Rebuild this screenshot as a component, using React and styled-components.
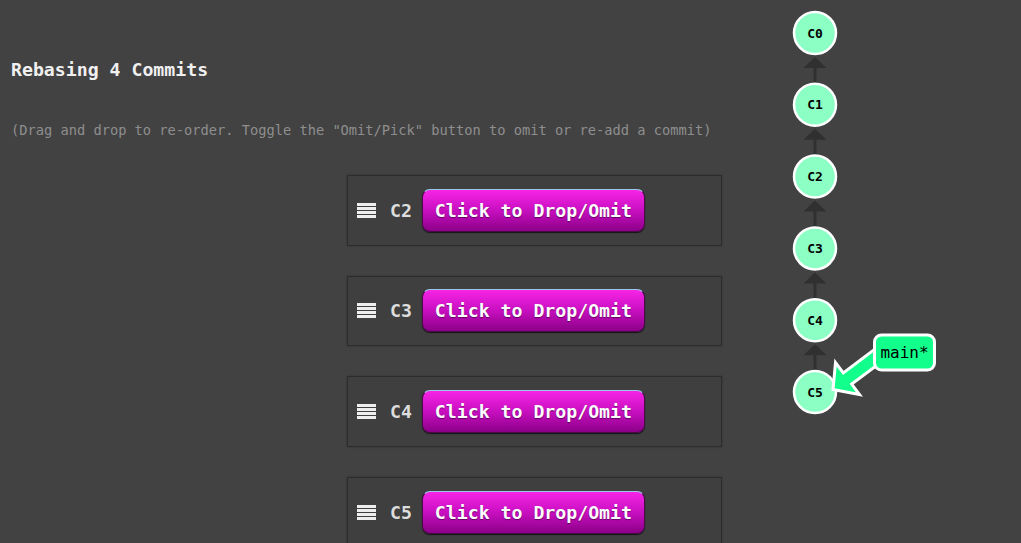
import React from 'react';
import styled, { createGlobalStyle } from 'styled-components';

const commits = ['C2', 'C3', 'C4', 'C5'];
const tree = ['C0', 'C1', 'C2', 'C3', 'C4', 'C5'];
const NODE_X = 815;
const nodeY = (i) => 33 + i * 71.8;

const GlobalStyle = createGlobalStyle`
  html, body {
    margin: 0;
    padding: 0;
    background: #424242;
    overflow: hidden;
  }
  * {
    box-sizing: border-box;
  }
`;

const GripIcon = () => (
  <svg width='19' height='15' viewBox='0 0 19 15'>
    {[0, 4, 8, 12].map((y) => (
      <rect key={y} x='0' y={y} width='19' height='3' fill='#eeeeee' />
    ))}
  </svg>
);

const CommitRow = ({ id }) => (
  <Card>
    <GripIcon />
    <CommitId>{id}</CommitId>
    <DropButton>Click to Drop/Omit</DropButton>
  </Card>
);

const Edge = ({ from, to }) => {
  const top = nodeY(from) + 24;
  const bottom = nodeY(to) - 22;
  return (
    <g fill='#303030' stroke='#303030'>
      <line x1={NODE_X} y1={top + 10} x2={NODE_X} y2={bottom} strokeWidth='3' />
      <polygon
        points={`${NODE_X},${top} ${NODE_X - 11.5},${top + 11} ${NODE_X + 11.5},${top + 11}`}
        strokeWidth='0'
      />
    </g>
  );
};

const CommitTree = () => (
  <TreeCanvas viewBox='770 0 251 543' width='251' height='543'>
    {tree.slice(1).map((c, i) => (
      <Edge key={c} from={i} to={i + 1} />
    ))}
    {tree.map((c, i) => (
      <g key={c}>
        <circle cx={NODE_X} cy={nodeY(i)} r='21' fill='#8cffc5' stroke='#ffffff' strokeWidth='2.5' />
        <NodeLabel x={NODE_X} y={nodeY(i) + 4.5} textAnchor='middle'>
          {c}
        </NodeLabel>
      </g>
    ))}
    <polygon
      points='833,389.5 835.5,362.5 843.3,372.9 879.3,345.9 887.7,357.1 851.7,384.1 859.5,394.5'
      fill='#12ff8c'
      stroke='#ffffff'
      strokeWidth='3'
      strokeLinejoin='miter'
    />
    <rect x='874.5' y='335' width='60' height='35' rx='7' fill='#12ff8c' stroke='#ffffff' strokeWidth='3' />
    <BranchLabel x='904.5' y='357.5' textAnchor='middle'>
      main*
    </BranchLabel>
  </TreeCanvas>
);

export default function App() {
  return (
    <>
      <GlobalStyle />
      <Page>
        <Dialog>
          <Title>Rebasing 4 Commits</Title>
          <Hint>
            (Drag and drop to re-order. Toggle the "Omit/Pick" button to omit or re-add a commit)
          </Hint>
          <CommitList>
            {commits.map((id) => (
              <CommitRow key={id} id={id} />
            ))}
          </CommitList>
        </Dialog>
        <CommitTree />
      </Page>
    </>
  );
}

const mono = `"DejaVu Sans Mono", "Liberation Mono", monospace`;

const Page = styled.div`
  width: 1021px;
  height: 543px;
  display: grid;
  grid-template-columns: 770px 251px;
  background: #424242;
  font-family: ${mono};
  overflow: hidden;
`;

const Dialog = styled.div`
  padding: 58px 0 0 11px;
  display: flex;
  flex-direction: column;
`;

const Title = styled.h2`
  margin: 0;
  font-size: 18.2px;
  line-height: 24px;
  font-weight: bold;
  color: #f0f0f0;
`;

const Hint = styled.p`
  margin: 38px 0 0;
  font-size: 13.7px;
  line-height: 20px;
  color: #8e8e8e;
  white-space: nowrap;
`;

const CommitList = styled.div`
  margin: 35px 0 0 336px;
  display: flex;
  flex-direction: column;
  gap: 30px;
`;

const Card = styled.div`
  width: 375px;
  height: 70.6px;
  flex-shrink: 0;
  display: flex;
  align-items: center;
  padding-left: 9px;
  background: #3f3f3f;
  border: 1px solid #2c2c2c;
  box-shadow: 0 0 2px rgba(0, 0, 0, 0.25);
`;

const CommitId = styled.span`
  margin: 0 10px 0 14px;
  font-size: 18.2px;
  font-weight: bold;
  color: #dddddd;
`;

const DropButton = styled.button`
  width: 223px;
  height: 43px;
  padding: 0;
  font-family: ${mono};
  font-size: 18.2px;
  font-weight: bold;
  color: #ffffff;
  text-shadow: 0 1px 1px rgba(0, 0, 0, 0.45);
  background: linear-gradient(to bottom, #f724e6 0%, #c80fc0 50%, #8c0088 100%);
  border: 1px solid #4a0a48;
  border-top-color: #9bc8e6;
  border-radius: 8px;
  box-shadow: 0 1px 1px rgba(0, 0, 0, 0.7);
  cursor: pointer;
`;

const TreeCanvas = styled.svg`
  display: block;
`;

const NodeLabel = styled.text`
  font-family: ${mono};
  font-size: 13px;
  font-weight: bold;
  fill: #000000;
`;

const BranchLabel = styled.text`
  font-family: ${mono};
  font-size: 16px;
  fill: #000000;
`;
